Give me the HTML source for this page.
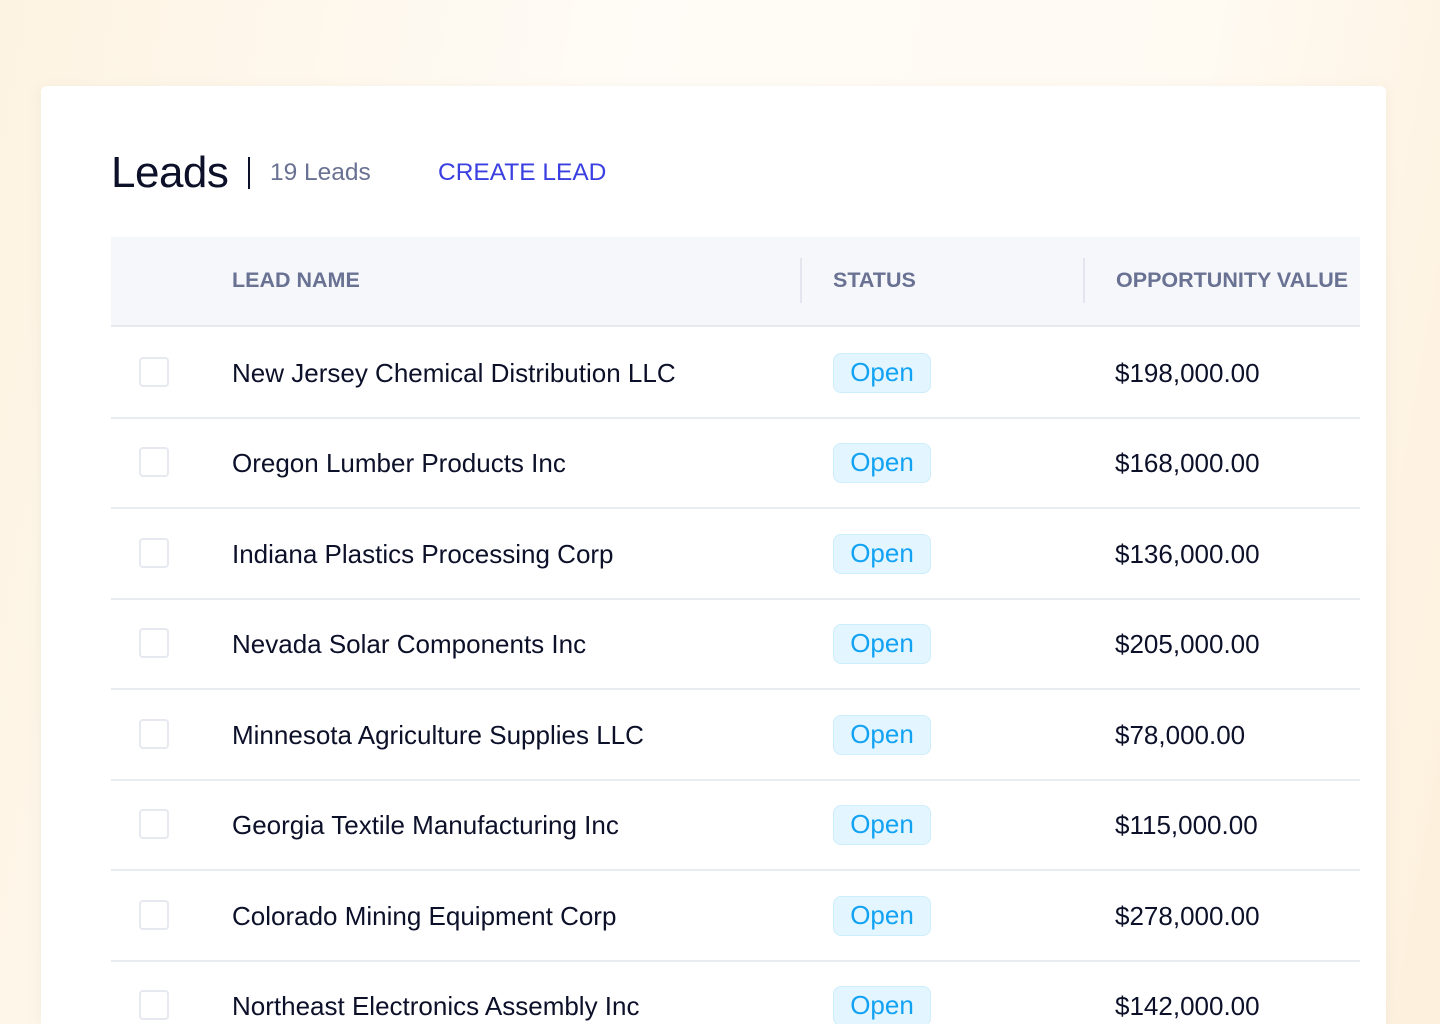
<!DOCTYPE html>
<html><head><meta charset="utf-8"><style>
*{margin:0;padding:0;box-sizing:border-box}
html,body{width:1440px;height:1024px;overflow:hidden}
body{font-family:"Liberation Sans",sans-serif;background:linear-gradient(100deg,#fdf3e2 0%,#fffcf7 40%,#fffaf2 75%,#fdf0dc 100%)}
.wrap{position:relative;width:1440px;height:1024px;overflow:hidden}
.card{position:absolute;left:41px;top:86px;width:1345px;height:938px;background:#fff;border-radius:6px 6px 0 0;box-shadow:0 2px 12px rgba(200,190,170,.18)}
.t{position:absolute;white-space:nowrap}
.h1{left:111px;top:148px;font-size:44px;color:#0c1029;letter-spacing:-.5px}
.bar{position:absolute;left:248px;top:157px;width:2px;height:32px;background:#0c1029}
.cnt{left:270px;top:159px;font-size:24.5px;color:#6a7293}
.cl{left:438px;top:159px;font-size:24.5px;color:#3a3fe0}
.head{position:absolute;left:111px;top:237px;width:1249px;height:90px;background:#f6f7fb;border-bottom:2px solid #e6e9f0}
.hd{top:268px;font-size:21.5px;color:#6a7293;font-weight:bold}
.sep{position:absolute;top:258px;width:2px;height:45px;background:#e3e6ee}
.row{position:absolute;left:111px;width:1249px;height:90.5px;border-bottom:2px solid #e8ebf0}
.cb{position:absolute;left:28px;top:29px;width:30px;height:30px;border:2px solid #e6e9ef;border-radius:4px}
.nm{position:absolute;left:121px;top:30px;font-size:26px;color:#0c1029;white-space:nowrap}
.bd{position:absolute;left:722px;top:25px;width:98px;height:40px;background:#e3f5fe;border:1.5px solid #cdeefc;border-radius:8px;color:#12a2f4;font-size:26px;text-align:center;line-height:37px}
.vl{position:absolute;left:1004px;top:30px;font-size:26px;color:#0c1029;white-space:nowrap}
</style></head><body><div class="wrap">
<div class="card"></div>
<div class="t h1">Leads</div><div class="bar"></div>
<div class="t cnt">19 Leads</div>
<div class="t cl">CREATE LEAD</div>
<div class="head"></div>
<div class="t hd" style="left:232px">LEAD NAME</div>
<div class="sep" style="left:800px"></div>
<div class="t hd" style="left:833px">STATUS</div>
<div class="sep" style="left:1083px"></div>
<div class="t hd" style="left:1116px">OPPORTUNITY VALUE</div>

<div class="row" style="top:328px"><div class="cb"></div><div class="nm">New Jersey Chemical Distribution LLC</div><div class="bd">Open</div><div class="vl">$198,000.00</div></div>
<div class="row" style="top:418px"><div class="cb"></div><div class="nm">Oregon Lumber Products Inc</div><div class="bd">Open</div><div class="vl">$168,000.00</div></div>
<div class="row" style="top:509px"><div class="cb"></div><div class="nm">Indiana Plastics Processing Corp</div><div class="bd">Open</div><div class="vl">$136,000.00</div></div>
<div class="row" style="top:599px"><div class="cb"></div><div class="nm">Nevada Solar Components Inc</div><div class="bd">Open</div><div class="vl">$205,000.00</div></div>
<div class="row" style="top:690px"><div class="cb"></div><div class="nm">Minnesota Agriculture Supplies LLC</div><div class="bd">Open</div><div class="vl">$78,000.00</div></div>
<div class="row" style="top:780px"><div class="cb"></div><div class="nm">Georgia Textile Manufacturing Inc</div><div class="bd">Open</div><div class="vl">$115,000.00</div></div>
<div class="row" style="top:871px"><div class="cb"></div><div class="nm">Colorado Mining Equipment Corp</div><div class="bd">Open</div><div class="vl">$278,000.00</div></div>
<div class="row" style="top:961px"><div class="cb"></div><div class="nm">Northeast Electronics Assembly Inc</div><div class="bd">Open</div><div class="vl">$142,000.00</div></div>
</div></body></html>
